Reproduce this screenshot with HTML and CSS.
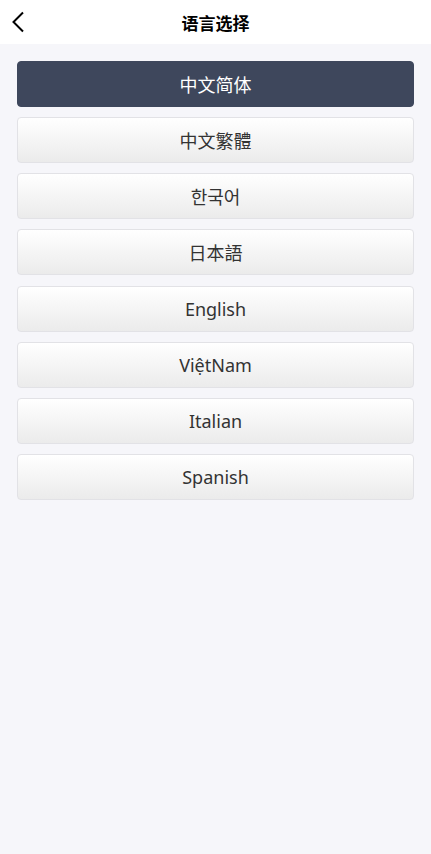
FILE: index.html
```html
<!DOCTYPE html>
<html>
<head>
    <meta charset="utf-8">
    <title>语言选择</title>
    <link rel="stylesheet" href="styles.css">
</head>
<body>
    <div class="header">
        <a class="back" href="#">
            <svg width="14" height="22" viewBox="0 0 14 22">
                <path d="M12 1.5 L2.5 11 L12 20.5" fill="none" stroke="#000" stroke-width="2"/>
            </svg>
        </a>
        <h1 class="title">语言选择</h1>
    </div>
    <div class="list">
        <button class="lang active">中文简体</button>
        <button class="lang">中文繁體</button>
        <button class="lang">한국어</button>
        <button class="lang">日本語</button>
        <button class="lang">English</button>
        <button class="lang">ViệtNam</button>
        <button class="lang">Italian</button>
        <button class="lang">Spanish</button>
    </div>
</body>
</html>
```

FILE: styles.css
```css
html, body {
    margin: 0;
    padding: 0;
    height: 100%;
}
body {
    background-color: #f6f6fa;
    font-family: "Noto Sans", "Noto Sans CJK SC", sans-serif;
}
.header {
    position: relative;
    height: 44px;
    background-color: white;
    display: flex;
    align-items: center;
    justify-content: center;
}
.back {
    position: absolute;
    left: 11px;
    top: 11px;
    display: block;
}
.title {
    margin: 0;
    font-size: 17px;
    font-weight: bold;
    color: #000;
}
.list {
    display: flex;
    flex-direction: column;
    gap: 10.15px;
    padding: 17px 17px;
}
.lang {
    height: 46px;
    border: 1px solid #e2e2e6;
    border-radius: 4px;
    background: linear-gradient(#ffffff, #ebebeb);
    color: #333;
    font-family: inherit;
    font-size: 18px;
    padding: 0;
}
.lang.active {
    background: #3e475c;
    border-color: #3e475c;
    color: white;
}
```
